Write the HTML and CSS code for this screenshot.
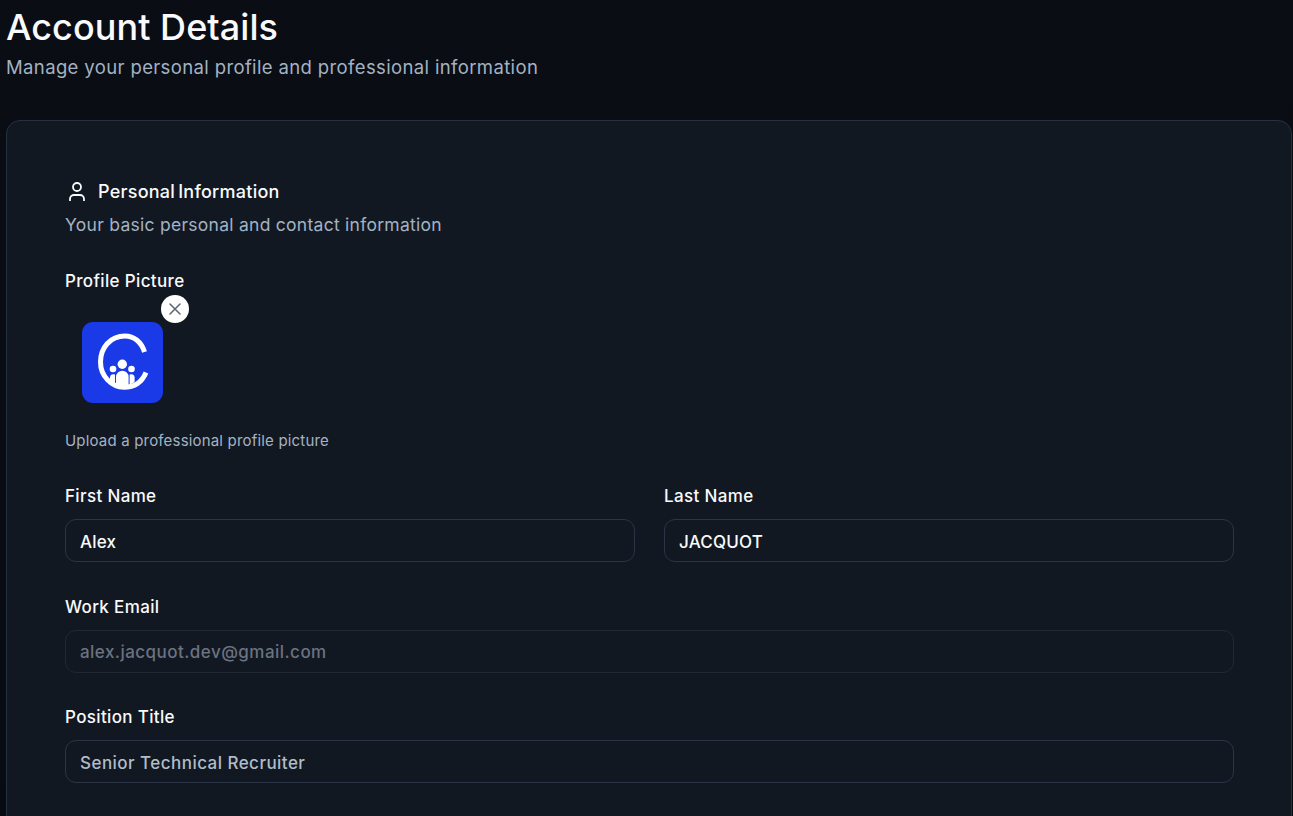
FILE: index.html
```html
<!DOCTYPE html>
<html lang="en">
<head>
<meta charset="utf-8">
<title>Account Details</title>
<link rel="stylesheet" href="styles.css">
</head>
<body>
<main class="page">
  <header class="page-head">
    <h1 class="page-title">Account Details</h1>
    <p class="page-sub">Manage your personal profile and professional information</p>
  </header>
  <section class="card">
    <h2 class="section-title">
      <svg class="user-icon" viewBox="0 0 24 24" fill="none" stroke="currentColor" stroke-width="1.8" stroke-linejoin="round"><path d="M19 21v-2a4 4 0 0 0-4-4H9a4 4 0 0 0-4 4v2"/><circle cx="12" cy="7" r="4"/></svg>
      <span>Personal Information</span>
    </h2>
    <p class="section-sub">Your basic personal and contact information</p>
    <div class="field picture-field">
      <span class="label">Profile Picture</span>
      <div class="avatar-wrap">
        <div class="avatar">
          <svg viewBox="0 0 81 81" width="81" height="81">
            <path d="M62.5 30C59.5 20 52 14 43 14C28 14 18.5 26 18.5 40C18.5 54 29.5 65.3 42 65.3C52 65.3 60 60 64 50.5" fill="none" stroke="#fff" stroke-width="5"/>
            <circle cx="40.3" cy="42.3" r="4.7" fill="#fff"/>
            <circle cx="31" cy="47" r="3.3" fill="#fff"/>
            <circle cx="49.5" cy="47" r="3.3" fill="#fff"/>
            <path d="M34 64V55a6.3 6.3 0 0 1 12.6 0V64Z" fill="#fff"/>
            <path d="M33 63V52.5a3.5 3.5 0 0 0-5 2.8V60Z" fill="#fff"/>
            <path d="M47.6 63V52.5a3.5 3.5 0 0 1 5 2.8V60Z" fill="#fff"/>
          </svg>
        </div>
        <button class="remove" type="button" aria-label="Remove picture">
          <svg viewBox="0 0 24 24" width="20" height="20" fill="none" stroke="currentColor" stroke-width="1.8" stroke-linecap="round"><path d="M18 6 6 18M6 6l12 12"/></svg>
        </button>
      </div>
      <p class="hint">Upload a professional profile picture</p>
    </div>
    <div class="name-grid">
      <label class="field"><span class="label">First Name</span><input class="input" value="Alex"></label>
      <label class="field"><span class="label">Last Name</span><input class="input" value="JACQUOT"></label>
    </div>
    <label class="field"><span class="label">Work Email</span><input class="input input-disabled" value="alex.jacquot.dev@gmail.com" disabled></label>
    <label class="field"><span class="label">Position Title</span><input class="input input-muted" value="Senior Technical Recruiter"></label>
  </section>
</main>
</body>
</html>
```
FILE: styles.css
```css
* { box-sizing: border-box; }
html, body { margin: 0; height: 100%; overflow: hidden; }
body {
  background: linear-gradient(180deg, #0a0d14 0%, #070b12 100%);
  font-family: Inter, "Noto Sans", sans-serif;
  color: #f8fafc;
}
.page { padding: 0 1px 0 6px; }
.page-head { height: 120px; padding-top: 5px; }
.page-title { margin: 0; font-size: 36px; line-height: 44px; font-weight: 500; letter-spacing: 0.05px; }
.page-sub { margin: 6px 0 0; font-size: 18.5px; line-height: 24px; color: #a3b3c2; letter-spacing: 0.37px; }
.card {
  background: #121822;
  border: 1px solid #263040;
  border-radius: 14px;
  padding: 59px 57px 40px 58px;
  height: 900px;
}
.section-title { margin: 0; display: flex; align-items: center; gap: 9px; font-size: 18px; line-height: 24px; font-weight: 500; letter-spacing: 0.25px; word-spacing: -2px; }
.user-icon { width: 24px; height: 24px; }
.section-sub { margin: 9px 0 0; font-size: 17.5px; line-height: 24px; color: #a3b3c2; letter-spacing: 0.27px; }
.field { display: block; margin-bottom: 32.5px; }
.picture-field { margin: 32px 0 33px; }
.label { display: block; font-size: 17px; line-height: 24px; font-weight: 500; letter-spacing: 0.35px; }
.avatar-wrap { position: relative; width: 124px; height: 122px; margin-top: 2px; padding: 27px 0 0 17px; }
.avatar { width: 81px; height: 81px; background: #1a3ae8; border-radius: 11px; }
.avatar svg { display: block; }
.remove {
  position: absolute; left: 96px; top: 0; width: 28px; height: 28px; padding: 0;
  display: flex; align-items: center; justify-content: center;
  border: 0; border-radius: 50%; background: #fff; color: #5b6470;
}
.hint { margin: 14px 0 0; font-size: 15px; line-height: 20px; color: #a3b3c2; letter-spacing: 0.18px; }
.name-grid { display: grid; grid-template-columns: 1fr 1fr; column-gap: 29px; }
.input {
  display: block; width: 100%; height: 43px; margin-top: 11px; padding: 2px 14px 0;
  background: transparent; border: 1px solid #2b3444; border-radius: 11px;
  font: 500 17px Inter, "Noto Sans", sans-serif; letter-spacing: 0.2px; color: #f8fafc; outline: none;
}
.input-disabled { color: #6b7280; border-color: #1f2835; letter-spacing: 0.46px; padding-top: 1px; }
.input-muted { color: #b0bdc9; letter-spacing: 0.46px; }
```
